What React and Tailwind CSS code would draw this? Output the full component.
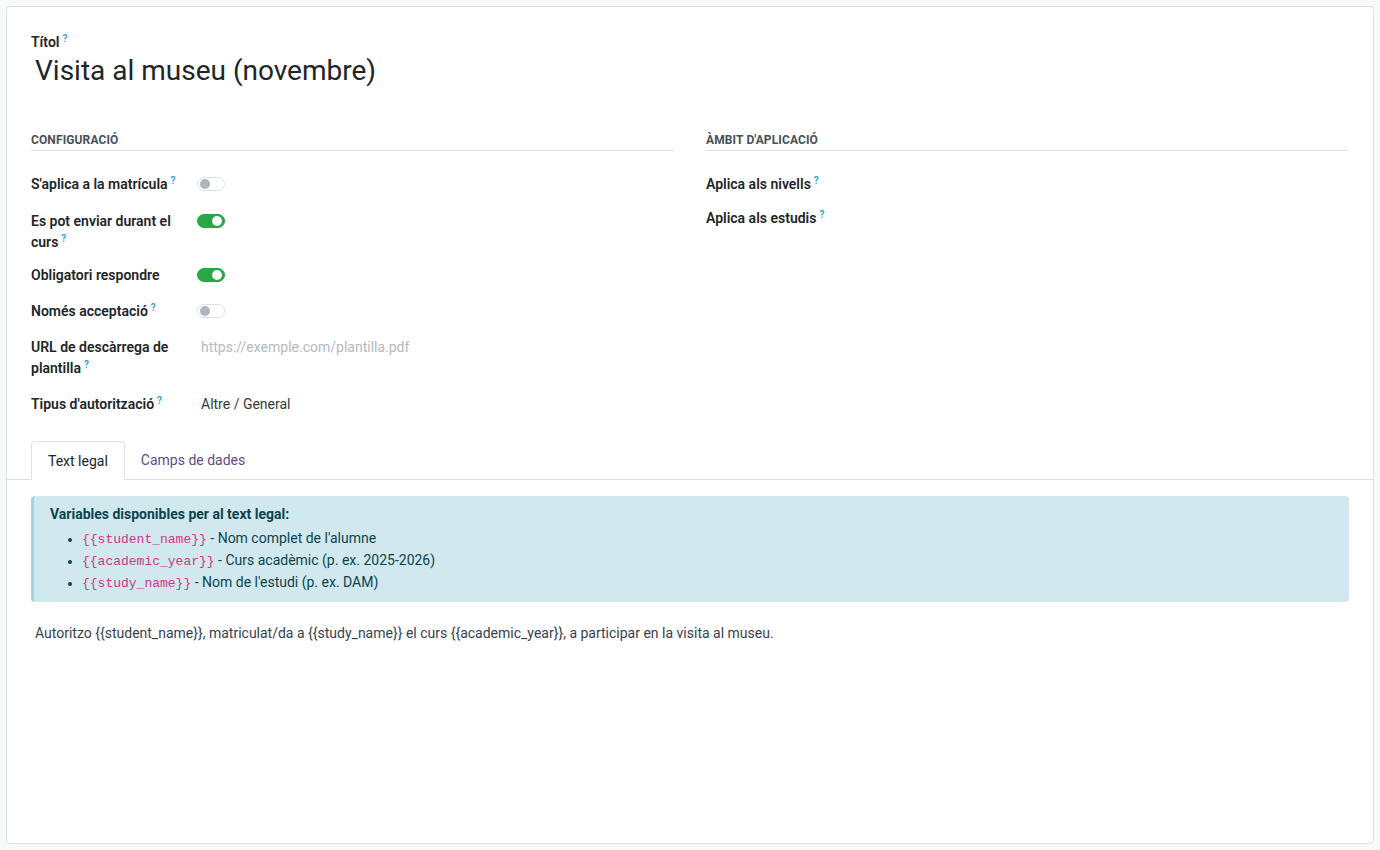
import React from 'react'

const font = { fontFamily: 'Roboto, "Noto Sans", sans-serif' }

function Help() {
  return <sup className="ml-[3px] text-[10px] font-semibold text-[#2a9fd0]">?</sup>
}

function Toggle({ on }) {
  return (
    <span
      className={
        '-ml-[4px] mt-[1px] inline-flex h-[14px] w-[28px] items-center rounded-full border px-[2px] ' +
        (on ? 'border-[#28a745] bg-[#28a745] justify-end' : 'border-[#dee2e6] bg-white justify-start')
      }
    >
      <span className={'h-[10px] w-[10px] rounded-full ' + (on ? 'bg-white' : 'bg-[#adb5bd]')} />
    </span>
  )
}

function Row({ label, help, children, gap = 'mb-[13px]' }) {
  return (
    <div className={'flex min-h-[24px] items-start ' + gap}>
      <div className="w-[170px] pr-2 text-[14px] font-semibold leading-[21px] text-[#212529]">
        {label}
        {help && <Help />}
      </div>
      <div className="flex-1 text-[14px] leading-[21px] text-[#495057]">{children}</div>
    </div>
  )
}

function SectionHeader({ children }) {
  return (
    <div className="mb-[23px] border-b border-[#dee2e6] pb-[1px] text-[12px] font-bold uppercase tracking-[0.01em] text-[#495057]">
      {children}
    </div>
  )
}

const variables = [
  ['{{student_name}}', " - Nom complet de l'alumne"],
  ['{{academic_year}}', ' - Curs acadèmic (p. ex. 2025-2026)'],
  ['{{study_name}}', " - Nom de l'estudi (p. ex. DAM)"],
]

export default function App() {
  return (
    <div className="min-h-[850px] bg-[#f8f9fa] p-[6px]" style={font}>
      <div className="h-[838px] rounded-[4px] border border-[#dee2e6] bg-white">
        <div className="px-[24px] pt-[26px]">
          {/* title */}
          <div className="text-[14px] font-semibold leading-[18px] text-[#212529]">
            Títol<Help />
          </div>
          <div className="ml-[4px] mt-[3px] text-[28px] leading-[34px] text-[#212529]">Visita al museu (novembre)</div>

          {/* config groups */}
          <div className="mt-[43px] grid grid-cols-2 gap-[32px]">
            <div>
              <SectionHeader>Configuració</SectionHeader>
              <Row label="S'aplica a la matrícula" help>
                <Toggle />
              </Row>
              <Row label="Es pot enviar durant el curs" help gap="mb-[12px]">
                <Toggle on />
              </Row>
              <Row label="Obligatori respondre" gap="mb-[12px]">
                <Toggle on />
              </Row>
              <Row label="Només acceptació" help gap="mb-[12px]">
                <Toggle />
              </Row>
              <Row label="URL de descàrrega de plantilla" help gap="mb-[15px]">
                <span className="text-[#b5b9bd]">https://exemple.com/plantilla.pdf</span>
              </Row>
              <Row label="Tipus d'autorització" help>
                <span className="text-[#343a40]">Altre / General</span>
              </Row>
            </div>
            <div>
              <SectionHeader>Àmbit d'aplicació</SectionHeader>
              <div className="mb-[13px] text-[14px] font-semibold leading-[21px] text-[#212529]">
                Aplica als nivells<Help />
              </div>
              <div className="text-[14px] font-semibold leading-[21px] text-[#212529]">
                Aplica als estudis<Help />
              </div>
            </div>
          </div>
        </div>

        {/* notebook tabs */}
        <div className="mt-[10px] flex border-b border-[#dee2e6] px-[24px]">
          <div className="-mb-px rounded-t-[4px] border border-[#dee2e6] border-b-white bg-white px-[16px] pb-[9px] pt-[11px] text-[14px] leading-[17px] text-[#212529]">
            Text legal
          </div>
          <div className="px-[16px] pb-[9px] pt-[11px] text-[14px] leading-[17px] text-[#5f4b8b]">Camps de dades</div>
        </div>

        <div className="px-[24px] pt-[16px]">
          <div className="rounded-[4px] border-l-[3px] border-[#a3d4dd] bg-[#d1e9ee] px-[16px] pb-[8px] pt-[9px] text-[#0c4350]">
            <div className="text-[14px] font-bold leading-[18px]">Variables disponibles per al text legal:</div>
            <ul className="mt-[5px] list-disc pl-[32px] text-[14px] leading-[21px] marker:text-[12px]">
              {variables.map(([code, desc]) => (
                <li key={code}>
                  <code className="text-[13px] text-[#d63384]" style={{ fontFamily: '"Liberation Mono", monospace' }}>
                    {code}
                  </code>
                  {desc}
                </li>
              ))}
            </ul>
          </div>
          <p className="ml-[4px] mt-[21px] text-[14px] leading-[21px] text-[#374151]">
            Autoritzo {'{{student_name}}'}, matriculat/da a {'{{study_name}}'} el curs {'{{academic_year}}'}, a participar en la visita al museu.
          </p>
        </div>
      </div>
    </div>
  )
}
